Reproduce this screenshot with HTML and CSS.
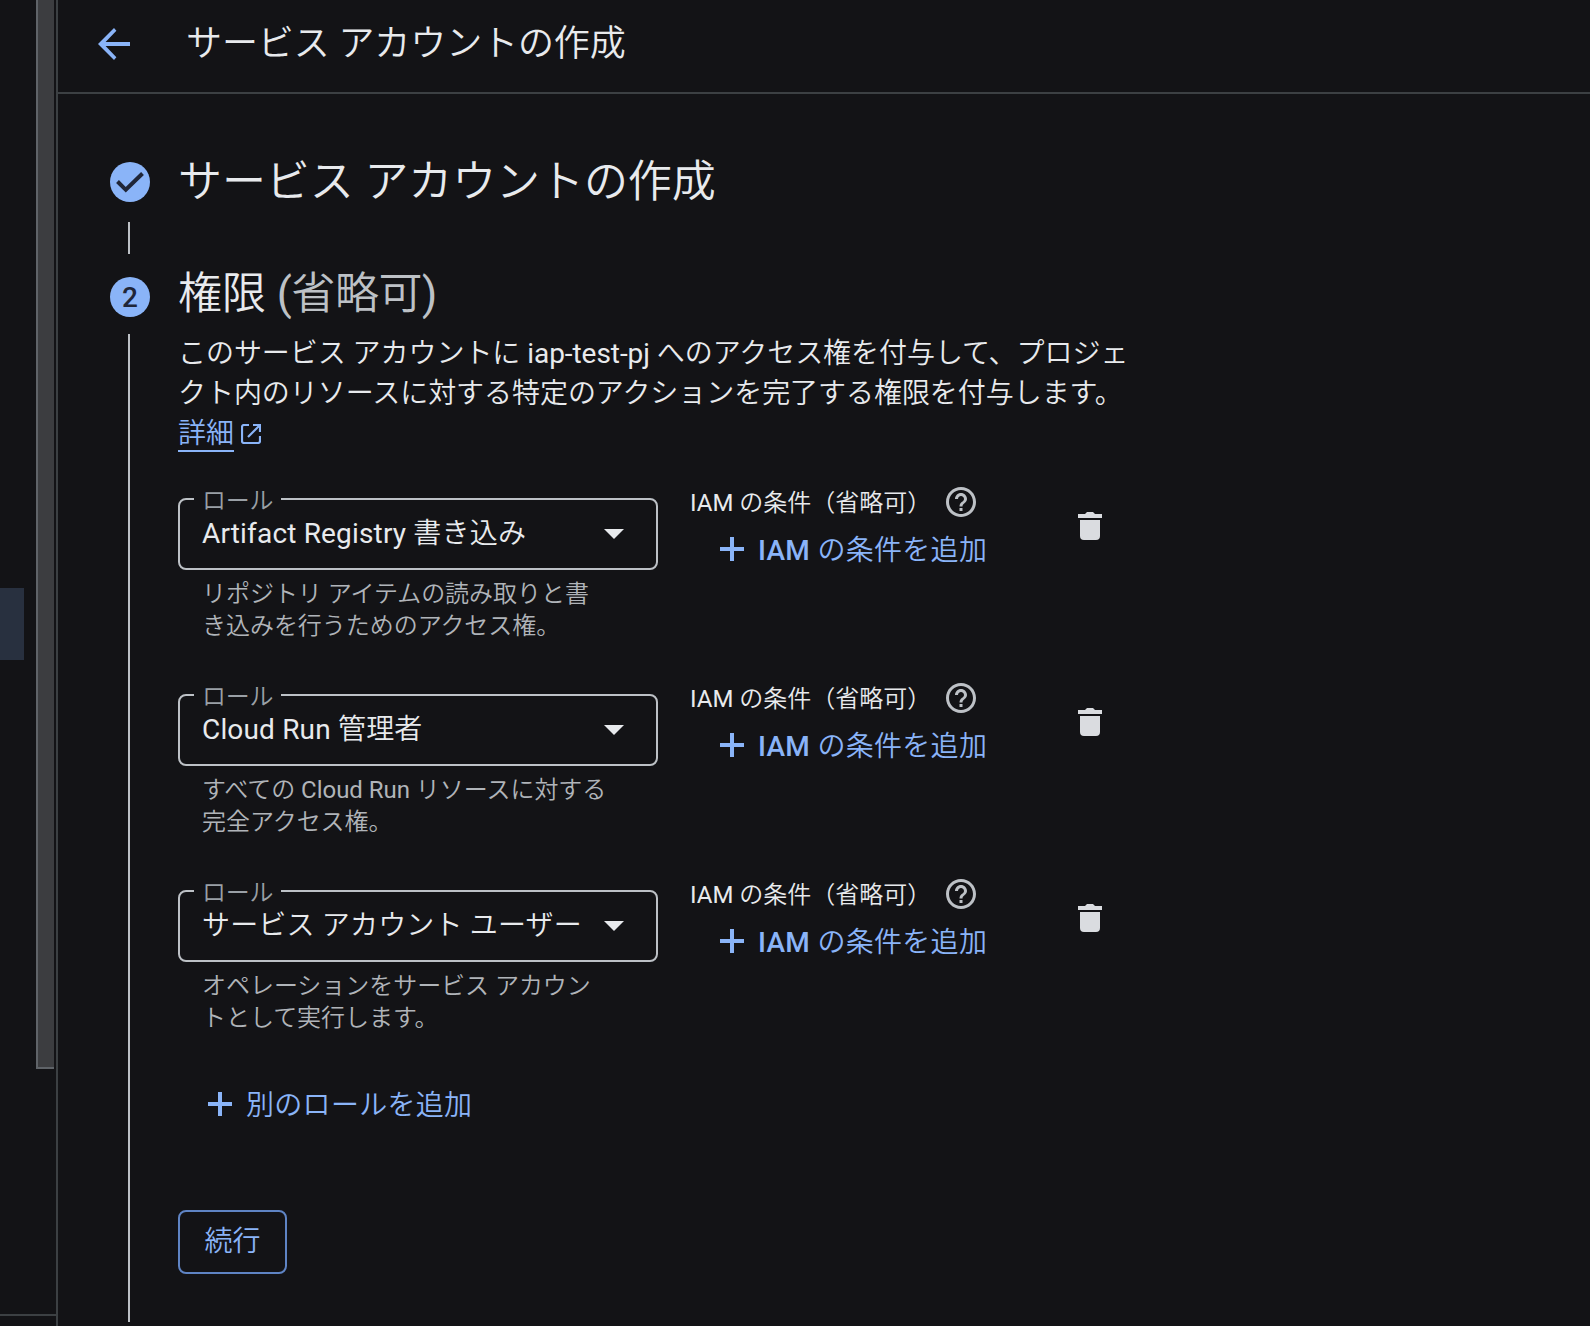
FILE: index.html
```html
<!DOCTYPE html>
<html lang="ja">

<head>
	<meta charset="UTF-8" />
	<meta name="viewport" content="width=device-width, initial-scale=1.0" />
	<title>サービス アカウントの作成</title>
	<link rel="stylesheet" href="styles.css">
</head>

<body>

	<svg class="sprite" width="0" height="0">
		<symbol id="plus" viewBox="0 0 24 24">
			<path d="M10 0h4v10h10v4H14v10h-4V14H0v-4h10z" />
		</symbol>
		<symbol id="help" viewBox="2 2 20 20">
			<path d="M11 18h2v-2h-2v2zm1-16C6.480 2 2 6.480 2 12s4.480 10 10 10 10-4.480 10-10S17.520 2 12 2zm0 18c-4.410 0-8-3.590-8-8s3.590-8 8-8 8 3.590 8 8-3.590 8-8 8zm0-14c-2.210 0-4 1.790-4 4h2c0-1.100.9-2 2-2s2 .9 2 2c0 2-3 1.750-3 5h2c0-2.250 3-2.500 3-5 0-2.210-1.790-4-4-4z" />
		</symbol>
		<symbol id="trash" viewBox="0 0 24 28">
			<path d="M0 2h7l2-2h6l2 2h7v4H0zM2 8h20v16a4 4 0 0 1-4 4H6a4 4 0 0 1-4-4z" />
		</symbol>
	</svg>

	<aside class="sidebar">
		<div class="nav">
			<div class="nav-active"></div>
			<div class="nav-footer"></div>
		</div>
		<div class="scroll-thumb"></div>
	</aside>

	<main class="main">
		<header class="header">
			<svg class="back" viewBox="0 0 32 32">
				<path d="M32 14v4H7.600l10.800 11.200L16 32 0 16 16 0l2.400 2.800L7.600 14z" />
			</svg>
			<h1>サービス アカウントの作成</h1>
		</header>

		<div class="stepper">
			<section class="step step-done">
				<div class="rail">
					<div class="dot">
						<svg viewBox="0 0 40 40">
							<path d="M7.500 19.500l8.300 8.300L32.500 11.500" />
						</svg>
					</div>
					<div class="line"></div>
				</div>
				<h2>サービス アカウントの作成</h2>
			</section>

			<section class="step step-current">
				<div class="rail">
					<div class="dot">2</div>
					<div class="line"></div>
				</div>
				<div class="content">
					<h2>権限 <span class="optional">(省略可)</span></h2>
					<p class="desc">
						このサービス アカウントに iap-test-pj へのアクセス権を付与して、プロジェ<br>
						クト内のリソースに対する特定のアクションを完了する権限を付与します。<br>
						<a class="more" href="#"><span>詳細</span><svg viewBox="0 0 20 20">
								<path d="M8 1H3a2 2 0 0 0-2 2v14a2 2 0 0 0 2 2h14a2 2 0 0 0 2-2v-5M12 1h7v7M19 1L7 13" />
							</svg></a>
					</p>

					<div class="role">
						<div class="field">
							<div class="select">
								<label>ロール</label>
								<span class="value">Artifact Registry 書き込み</span>
								<i class="caret"></i>
							</div>
							<p class="hint">リポジトリ アイテムの読み取りと書<br>き込みを行うためのアクセス権。</p>
						</div>
						<div class="condition">
							<div class="condition-label"><span>IAM の条件（省略可）</span><svg><use href="#help" /></svg></div>
							<button class="add"><svg><use href="#plus" /></svg><span>IAM の条件を追加</span></button>
						</div>
						<button class="delete"><svg><use href="#trash" /></svg></button>
					</div>

					<div class="role">
						<div class="field">
							<div class="select">
								<label>ロール</label>
								<span class="value">Cloud Run 管理者</span>
								<i class="caret"></i>
							</div>
							<p class="hint">すべての Cloud Run リソースに対する<br>完全アクセス権。</p>
						</div>
						<div class="condition">
							<div class="condition-label"><span>IAM の条件（省略可）</span><svg><use href="#help" /></svg></div>
							<button class="add"><svg><use href="#plus" /></svg><span>IAM の条件を追加</span></button>
						</div>
						<button class="delete"><svg><use href="#trash" /></svg></button>
					</div>

					<div class="role">
						<div class="field">
							<div class="select">
								<label>ロール</label>
								<span class="value">サービス アカウント ユーザー</span>
								<i class="caret"></i>
							</div>
							<p class="hint">オペレーションをサービス アカウン<br>トとして実行します。</p>
						</div>
						<div class="condition">
							<div class="condition-label"><span>IAM の条件（省略可）</span><svg><use href="#help" /></svg></div>
							<button class="add"><svg><use href="#plus" /></svg><span>IAM の条件を追加</span></button>
						</div>
						<button class="delete"><svg><use href="#trash" /></svg></button>
					</div>

					<button class="add add-role"><svg><use href="#plus" /></svg><span>別のロールを追加</span></button>
					<button class="continue">続行</button>
				</div>
			</section>
		</div>
	</main>

</body>

</html>
```
FILE: styles.css
```css
* {
	box-sizing: border-box;
	margin: 0;
	padding: 0;
}

body {
	display: flex;
	height: 1326px;
	overflow: hidden;
	background: #131316;
	color: #e8eaed;
	font-family: Roboto, 'Noto Sans CJK JP DemiLight', 'Noto Sans CJK JP', sans-serif;
	font-weight: 400;
	font-size: 28px;
}

button {
	background: none;
	border: none;
	color: inherit;
	font: inherit;
	cursor: pointer;
}

svg {
	display: block;
	fill: currentColor;
	flex-shrink: 0;
}

.sprite {
	position: absolute;
}

/* left navigation edge */
.sidebar {
	display: flex;
	width: 58px;
	border-right: 2px solid #3c4043;
	flex-shrink: 0;
}

.nav {
	display: flex;
	flex-direction: column;
	justify-content: space-between;
	width: 36px;
	padding-top: 588px;
}

.nav-active {
	width: 24px;
	height: 72px;
	background: #28303f;
}

.nav-footer {
	width: 56px;
	height: 12px;
	border-top: 2px solid #3c4043;
}

.scroll-thumb {
	width: 18px;
	height: 1069px;
	background: #3c3d40;
	border-left: 2px solid #5f6368;
	border-bottom: 2px solid #5f6368;
}

.main {
	flex: 1;
}

.header {
	display: flex;
	align-items: center;
	gap: 56px;
	height: 94px;
	padding: 0 40px 4px;
	border-bottom: 2px solid #3c4043;
}

.header h1 {
	font-size: 36px;
	font-weight: 400;
	line-height: 44px;
	letter-spacing: -.1px;
}

.back {
	width: 32px;
	height: 32px;
	color: #8ab4f8;
}

/* stepper */
.stepper {
	padding: 66px 0 0 52px;
}

.step {
	display: flex;
	gap: 28px;
}

.step h2 {
	font-size: 44px;
	font-weight: 400;
	line-height: 44px;
	letter-spacing: -.1px;
}

.rail {
	display: flex;
	flex-direction: column;
	width: 40px;
}

.dot {
	width: 40px;
	height: 40px;
	border-radius: 50%;
	background: #8ab4f8;
	color: #202638;
	font-size: 28px;
	font-weight: 500;
	line-height: 41px;
	text-align: center;
}

.dot path {
	fill: none;
	stroke: currentColor;
	stroke-width: 4;
}

.line {
	width: 2px;
	margin-left: 18px;
	background: #bdc1c6;
}

.step-done {
	height: 112px;
}

.step-done .dot {
	margin: 2px 0 20px;
}

.step-done .line {
	height: 32px;
}

.step-current .dot {
	margin: 5px 0 17px;
}

.step-current .line {
	height: 988px;
}

.step .optional {
	color: #bdc1c6;
	letter-spacing: -.4px;
}

.desc {
	margin-top: 18px;
	line-height: 40px;
	letter-spacing: -.05px;
}

.more {
	display: flex;
	gap: 7px;
	height: 38px;
	color: #8ab4f8;
	text-decoration: none;
}

.more span {
	height: 38px;
	border-bottom: 2px solid #8ab4f8;
}

.more svg {
	width: 20px;
	height: 20px;
	margin-top: 10px;
	fill: none;
	stroke: currentColor;
	stroke-width: 2.2;
}

/* role rows */
.role {
	display: flex;
	height: 196px;
}

.desc + .role {
	margin-top: 46px;
}

.field {
	width: 480px;
}

.select {
	position: relative;
	display: flex;
	align-items: center;
	justify-content: space-between;
	height: 72px;
	padding: 0 32px 0 22px;
	border: 2px solid #bdc1c6;
	border-radius: 8px;
}

.select label {
	position: absolute;
	top: -17px;
	left: 14px;
	width: 87px;
	padding-left: 8px;
	background: #131316;
	color: #9aa0a6;
	font-size: 24px;
	line-height: 36px;
	letter-spacing: -.2px;
}

.value {
	margin-bottom: 1px;
	line-height: 36px;
	letter-spacing: .17px;
	white-space: nowrap;
}

.caret {
	border: 10px solid transparent;
	border-top-color: #e8eaed;
	border-bottom: 0;
}

.hint {
	padding: 8px 0 0 24px;
	color: #b0b4b9;
	font-size: 24px;
	line-height: 32px;
	letter-spacing: -.04px;
}

.condition {
	width: 388px;
	padding-left: 32px;
}

.condition-label {
	display: flex;
	justify-content: space-between;
	width: 286px;
	height: 30px;
	margin-top: -11px;
	font-size: 24px;
	line-height: 32px;
	white-space: nowrap;
}

.condition-label svg {
	width: 30px;
	height: 30px;
	color: #bdc1c6;
}

.add {
	display: flex;
	align-items: center;
	gap: 14px;
	height: 40px;
	color: #8ab4f8;
	font-size: 28px;
	font-weight: 500;
	letter-spacing: .3px;
}

.add span {
	padding-top: 3px;
	font-weight: 500;
	line-height: 37px;
}

.add svg {
	width: 24px;
	height: 24px;
}

.condition .add {
	margin: 12px 0 0 30px;
}

.delete {
	height: 28px;
	margin: 14px 0 0 32px;
	color: #dadce0;
}

.delete svg {
	width: 24px;
	height: 28px;
}

.add-role {
	margin: -2px 0 0 30px;
}

.continue {
	display: block;
	width: 109px;
	height: 64px;
	margin-top: 86px;
	border: 2px solid #5f84c4;
	border-radius: 8px;
	color: #8ab4f8;
	line-height: 60px;
}
```
